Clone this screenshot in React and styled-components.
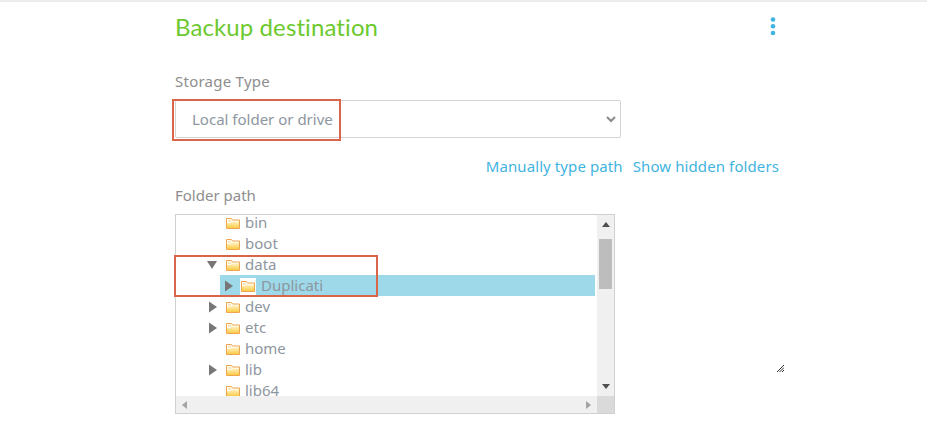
import React from "react";
import styled, { createGlobalStyle } from "styled-components";

const Global = createGlobalStyle`
  html, body { margin: 0; padding: 0; background: #fff; }
  body { font-family: "Noto Sans", sans-serif; color: #8e8e8e; }
  * { box-sizing: border-box; }
`;

const Page = styled.div`
  position: relative;
  width: 927px;
  height: 429px;
  overflow: hidden;
  border-top: 2px solid #ececec;
  padding: 0 148px 0 175px;
`;
const Header = styled.div`
  display: flex;
  justify-content: space-between;
  align-items: center;
  height: 50px;
  margin-bottom: 19px;
`;
const Title = styled.h1`
  margin: 0;
  padding-bottom: 2px;
  font-family: "Lato", sans-serif;
  font-size: 24px;
  font-weight: 400;
  letter-spacing: 0.1px;
  color: #6cc92e;
`;
const Dots = styled.svg`
  width: 6px;
  height: 20px;
  margin-right: 3px;
`;
const Label = styled.div`
  font-size: 15px;
  height: 21px;
  line-height: 21px;
  color: #8e8e8e;
`;
const StorageLabel = styled(Label)`
  letter-spacing: 0.25px;
`;
const Select = styled.div`
  width: 446px;
  height: 38px;
  margin-top: 8px;
  border: 1px solid #d4d4d4;
  border-radius: 2px;
  padding: 0 4px 0 16px;
  display: flex;
  align-items: center;
  justify-content: space-between;
  font-size: 15px;
  color: #8e96a0;
`;
const Links = styled.div`
  display: flex;
  justify-content: flex-end;
  gap: 10px;
  margin-top: 18px;
  width: 604px;
  font-size: 15px;
  letter-spacing: 0.1px;
  line-height: 21px;
  color: #3fb4e0;
`;
const PathLabel = styled(Label)`
  margin-top: 8px;
`;
const Tree = styled.div`
  width: 440px;
  height: 200px;
  margin-top: 8px;
  border: 1px solid #d0d0d0;
  display: grid;
  grid-template-columns: 1fr 17px;
  grid-template-rows: 1fr 17px;
`;
const Viewport = styled.div`
  overflow: hidden;
  min-width: 0;
`;
const List = styled.div`
  margin-top: -3px;
`;
const Row = styled.div`
  height: 21px;
  display: flex;
  align-items: center;
  padding-left: ${(p) => p.$indent}px;
  font-size: 15px;
  color: #8e96a0;
`;
const Body = styled.div`
  display: flex;
  align-items: center;
  height: 21px;
  flex: 1;
  margin-right: 2px;
  padding-left: ${(p) => (p.$on ? 2 : 0)}px;
  background: ${(p) => (p.$on ? "#9dd9e8" : "transparent")};
`;
const ArrowSlot = styled.svg`
  width: 12px;
  height: 12px;
  flex: none;
  margin-top: 1px;
`;
const FolderWrap = styled.span`
  display: flex;
  width: ${(p) => (p.$on ? 16 : 15)}px;
  height: 17px;
  margin-left: ${(p) => (p.$on ? 6 : 7)}px;
  margin-top: 1px;
  align-items: center;
  justify-content: center;
  flex: none;
  background: ${(p) => (p.$on ? "#fff" : "transparent")};
`;
const RowText = styled.span`
  margin-left: 5px;
  padding-bottom: 2px;
`;
const VBar = styled.div`
  background: #f0f0f0;
  display: flex;
  flex-direction: column;
  align-items: center;
  justify-content: space-between;
  position: relative;
  padding: 7px 0;
`;
const Thumb = styled.div`
  position: absolute;
  left: 2px;
  top: 24px;
  width: 13px;
  height: 50px;
  background: #bdbdbd;
`;
const HBar = styled.div`
  background: #f0f0f0;
  display: flex;
  align-items: center;
  justify-content: space-between;
  padding: 0 6px;
`;
const Corner = styled.div`
  background: #dadada;
`;
const Grip = styled.svg`
  position: absolute;
  left: 777px;
  top: 363px;
  width: 7px;
  height: 7px;
`;
const Mark = styled.div`
  position: absolute;
  border: 2px solid #d9654a;
  left: ${(p) => p.$x}px;
  top: ${(p) => p.$y}px;
  width: ${(p) => p.$w}px;
  height: ${(p) => p.$h}px;
  pointer-events: none;
`;

const Folder = () => (
  <svg width="14" height="11" viewBox="0 0 14 11">
    <defs>
      <linearGradient id="folderFill" x1="0" y1="0" x2="0" y2="1">
        <stop offset="0" stopColor="#fff3c4" />
        <stop offset="1" stopColor="#fccb45" />
      </linearGradient>
    </defs>
    <path d="M.5 10.5V.5h5l1 1.5h7v8.5z" fill="#fffdf2" stroke="#f0a44e" />
    <path d="M1 10V5h3.5l1-1.5H13V10z" fill="url(#folderFill)" />
    <path d="M2 3h3" stroke="#f3cf8e" />
  </svg>
);
const Arrow = ({ open }) => (
  <ArrowSlot viewBox="0 0 12 12">
    {open === undefined ? null : open ? (
      <path d="M1 2h10L6 10z" fill="#777" />
    ) : (
      <path d="M3 .5v11L11 6z" fill="#777" />
    )}
  </ArrowSlot>
);

const rows = [
  ["bin"],
  ["boot"],
  ["data", true],
  ["Duplicati", false, true],
  ["dev", false],
  ["etc", false],
  ["home"],
  ["lib", false],
  ["lib64"],
];

export default function App() {
  return (
    <Page>
      <Global />
      <Header>
        <Title>Backup destination</Title>
        <Dots viewBox="0 0 6 20">
          <circle cx="3" cy="2.5" r="2.3" fill="#3fb4e0" />
          <circle cx="3" cy="9.3" r="2.3" fill="#3fb4e0" />
          <circle cx="3" cy="16" r="2.3" fill="#3fb4e0" />
        </Dots>
      </Header>
      <StorageLabel>Storage Type</StorageLabel>
      <Select>
        <span>Local folder or drive</span>
        <svg width="10" height="7" viewBox="0 0 10 7">
          <path d="M1 1l4 4 4-4" fill="none" stroke="#8a8a8a" strokeWidth="2" />
        </svg>
      </Select>
      <Links>
        <span>Manually type path</span>
        <span>Show hidden folders</span>
      </Links>
      <PathLabel>Folder path</PathLabel>
      <Tree>
        <Viewport>
          <List>
            {rows.map(([name, open, on]) =>
              on ? (
                <Row key={name} $indent={44}>
                  <Body $on>
                    <Arrow open={false} />
                    <FolderWrap $on>
                      <Folder />
                    </FolderWrap>
                    <RowText>{name}</RowText>
                  </Body>
                </Row>
              ) : (
                <Row key={name} $indent={30}>
                  <Arrow open={open} />
                  <Body>
                    <FolderWrap>
                      <Folder />
                    </FolderWrap>
                    <RowText>{name}</RowText>
                  </Body>
                </Row>
              )
            )}
          </List>
        </Viewport>
        <VBar>
          <svg width="8" height="5" viewBox="0 0 8 5"><path d="M0 5L4 0l4 5z" fill="#505050" /></svg>
          <Thumb />
          <svg width="8" height="5" viewBox="0 0 8 5"><path d="M0 0l4 5 4-5z" fill="#505050" /></svg>
        </VBar>
        <HBar>
          <svg width="5" height="8" viewBox="0 0 5 8"><path d="M5 0L0 4l5 4z" fill="#a3a3a3" /></svg>
          <svg width="5" height="8" viewBox="0 0 5 8"><path d="M0 0l5 4-5 4z" fill="#a3a3a3" /></svg>
        </HBar>
        <Corner />
      </Tree>
      <Grip viewBox="0 0 7 7">
        <path d="M0 7L7 0M2.5 7L7 2.5M5 7l2-2" stroke="#333" strokeWidth="1" fill="none" />
      </Grip>
      <Mark $x={172} $y={97} $w={169} $h={42} />
      <Mark $x={174} $y={253} $w={204} $h={42} />
    </Page>
  );
}
